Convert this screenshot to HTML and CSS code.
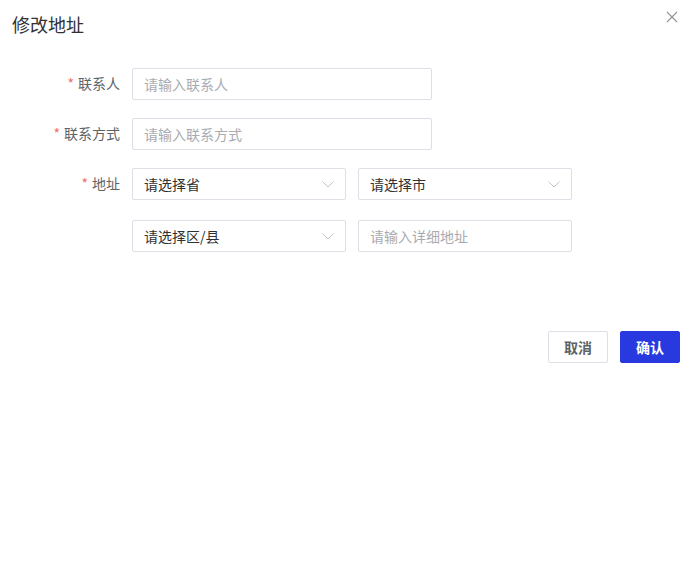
FILE: index.html
```html
<!DOCTYPE html>
<html lang="zh">
<head>
<meta charset="utf-8">
<link rel="stylesheet" href="styles.css">
</head>
<body>
<div class="dialog">
  <div class="header">
    <span class="title">修改地址</span>
    <span class="close"><svg width="12" height="12" viewBox="0 0 12 12"><path d="M1 1L11 11M11 1L1 11" stroke="#909399" stroke-width="1.1" fill="none"/></svg></span>
  </div>
  <div class="form">
    <div class="row">
      <label class="label"><span class="star">*</span>联系人</label>
      <div class="input wide"><span class="ph">请输入联系人</span></div>
    </div>
    <div class="row">
      <label class="label"><span class="star">*</span>联系方式</label>
      <div class="input wide"><span class="ph">请输入联系方式</span></div>
    </div>
    <div class="row addr">
      <label class="label"><span class="star">*</span>地址</label>
      <div class="grid">
        <div class="input sel"><span class="val">请选择省</span><svg class="chev" width="12" height="7" viewBox="0 0 12 7"><path d="M0.5 0.5L6 6L11.5 0.5" stroke="#c0c4cc" stroke-width="1" fill="none"/></svg></div>
        <div class="input sel"><span class="val">请选择市</span><svg class="chev" width="12" height="7" viewBox="0 0 12 7"><path d="M0.5 0.5L6 6L11.5 0.5" stroke="#c0c4cc" stroke-width="1" fill="none"/></svg></div>
        <div class="input sel"><span class="val">请选择区/县</span><svg class="chev" width="12" height="7" viewBox="0 0 12 7"><path d="M0.5 0.5L6 6L11.5 0.5" stroke="#c0c4cc" stroke-width="1" fill="none"/></svg></div>
        <div class="input"><span class="ph">请输入详细地址</span></div>
      </div>
    </div>
  </div>
  <div class="footer">
    <button class="btn cancel">取消</button>
    <button class="btn ok">确认</button>
  </div>
</div>
</body>
</html>
```

FILE: styles.css
```css
* { box-sizing: border-box; }
html, body { margin: 0; padding: 0; background: #fff; }
body {
  font-family: "Noto Sans CJK SC", "Noto Sans", sans-serif;
  color: #303133;
  width: 694px;
  height: 568px;
}
.dialog { padding: 0; }
.header {
  display: flex;
  justify-content: space-between;
  align-items: flex-start;
  padding: 10px 16px 0 12px;
  height: 68px;
}
.title { font-size: 18px; line-height: 28px; color: #303133; }
.close { margin-top: 1px; display: flex; }
.form { display: flex; flex-direction: column; gap: 18px; }
.row { display: flex; align-items: flex-start; }
.label {
  width: 132px;
  padding-right: 12px;
  text-align: right;
  font-size: 14px;
  line-height: 31px;
  color: #606266;
}
.star { color: #f56c6c; margin-right: 4px; }
.input {
  height: 32px;
  border: 1px solid #dcdfe6;
  border-radius: 2px;
  display: flex;
  align-items: center;
  padding: 0 11px 1px 11px;
  font-size: 14px;
  background: #fff;
}
.wide { width: 300px; }
.ph { color: #a8abb2; }
.val { color: #303133; }
.grid {
  display: grid;
  grid-template-columns: 214px 214px;
  column-gap: 12px;
  row-gap: 20px;
}
.sel { justify-content: space-between; }
.chev { margin-top: 1px; }
.footer {
  display: flex;
  justify-content: flex-end;
  gap: 12px;
  padding: 79px 14px 0 0;
}
.btn {
  height: 32px;
  width: 60px;
  font-size: 14px;
  font-family: inherit;
  font-weight: 700;
  border-radius: 2px;
  padding: 0 0 1px 0;
}
.cancel { background: #fff; border: 1px solid #dcdfe6; color: #606266; }
.ok { background: #2839e0; border: 1px solid #2839e0; color: #fff; }
```
